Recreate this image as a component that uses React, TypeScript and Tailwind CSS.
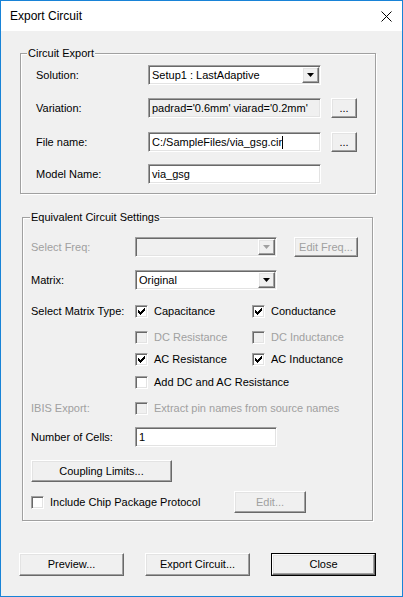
const sunken =
  "border border-t-[#a0a0a0] border-l-[#a0a0a0] border-b-white border-r-white shadow-[inset_1px_1px_0_#696969,inset_-1px_-1px_0_#e3e3e3]";
const raised =
  "border border-t-white border-l-white border-b-[#696969] border-r-[#696969] shadow-[inset_-1px_-1px_0_#a0a0a0,inset_1px_1px_0_#e3e3e3] bg-[#f0f0f0]";
const grey = "text-[#a0a0a0]";

function Arrow({ disabled = false }: { disabled?: boolean }) {
  return (
    <svg width="7" height="4" viewBox="0 0 7 4">
      <path d="M0 0H7L3.5 4Z" fill={disabled ? "#a0a0a0" : "#000"} />
    </svg>
  );
}

function Combo({
  value,
  width,
  disabled = false,
}: {
  value: string;
  width: string;
  disabled?: boolean;
}) {
  return (
    <div
      className={`${sunken} ${width} h-[20px] flex items-center ${
        disabled ? "bg-[#f0f0f0]" : "bg-white"
      }`}
    >
      <span className="flex-1 pl-[3px] whitespace-nowrap">{value}</span>
      <div
        className={`${raised} w-[17px] h-[16px] mr-[1px] flex items-center justify-center`}
      >
        <Arrow disabled={disabled} />
      </div>
    </div>
  );
}

function Field({
  value,
  width,
  readOnly = false,
  caret = false,
}: {
  value: string;
  width: string;
  readOnly?: boolean;
  caret?: boolean;
}) {
  return (
    <div
      className={`${sunken} ${width} h-[20px] flex items-center pl-[3px] whitespace-nowrap ${
        readOnly ? "bg-[#f0f0f0]" : "bg-white"
      }`}
    >
      {value}
      {caret && <span className="inline-block w-px h-[13px] bg-black" />}
    </div>
  );
}

function Button({
  label,
  width,
  height = "h-[22px]",
  disabled = false,
  isDefault = false,
}: {
  label: string;
  width: string;
  height?: string;
  disabled?: boolean;
  isDefault?: boolean;
}) {
  const face = (
    <div
      className={`${raised} w-full h-full flex items-center justify-center ${
        disabled ? grey : ""
      }`}
    >
      {label}
    </div>
  );
  if (isDefault) {
    return (
      <div className={`${width} ${height} border border-black flex`}>{face}</div>
    );
  }
  return <div className={`${width} ${height} flex`}>{face}</div>;
}

function Check({
  label,
  checked = false,
  disabled = false,
}: {
  label: string;
  checked?: boolean;
  disabled?: boolean;
}) {
  return (
    <div className="flex items-center h-[13px] whitespace-nowrap">
      <div
        className={`${sunken} w-[13px] h-[13px] flex items-center justify-center ${
          disabled ? "bg-[#f0f0f0]" : "bg-white"
        }`}
      >
        {checked && (
          <svg width="7" height="7" viewBox="0 0 7 7" shapeRendering="crispEdges">
            <path
              d="M6 0h1v1h-1zM5 1h2v1h-2zM0 2h1v1h-1zM4 2h3v1h-3zM0 3h2v1h-2zM3 3h3v1h-3zM0 4h5v1h-5zM1 5h3v1h-3zM2 6h1v1h-1z"
              fill="#000"
            />
          </svg>
        )}
      </div>
      <span className={`ml-[6px] ${disabled ? grey : ""}`}>{label}</span>
    </div>
  );
}

function Group({
  title,
  className,
  legendOffset,
  children,
}: {
  title: string;
  className: string;
  legendOffset: string;
  children: React.ReactNode;
}) {
  return (
    <fieldset
      className={`border border-[#a0a0a0] shadow-[1px_1px_0_white,inset_1px_1px_0_white] ${className}`}
    >
      <legend className={`${legendOffset} px-px leading-[13px] bg-[#f0f0f0]`}>
        {title}
      </legend>
      {children}
    </fieldset>
  );
}

export default function App() {
  return (
    <div
      className="w-[403px] h-[597px] border border-[#1883d7] bg-[#f0f0f0] flex flex-col text-[11px] leading-[13px] text-black"
      style={{ fontFamily: '"Liberation Sans", Arial, sans-serif' }}
    >
      <div className="h-[30px] bg-white flex items-center justify-between pl-[9px] pr-[10px] shrink-0">
        <span className="text-[12px] mt-px">Export Circuit</span>
        <svg width="11" height="11" viewBox="0 0 11 11">
          <path d="M0.5 0.5L10.5 10.5M10.5 0.5L0.5 10.5" stroke="#000" strokeWidth="1" />
        </svg>
      </div>

      <Group
        title="Circuit Export"
        className="mt-[16px] ml-[19px] w-[356px] pb-[9px]"
        legendOffset="ml-[6px]"
      >
        <div className="pl-[15px]">
          <div className="flex items-center h-[20px] mt-[5px]">
            <span className="w-[112px]">Solution:</span>
            <Combo value="Setup1 : LastAdaptive" width="w-[173px]" />
          </div>
          <div className="flex items-center h-[20px] mt-[13px]">
            <span className="w-[112px]">Variation:</span>
            <Field value="padrad='0.6mm' viarad='0.2mm'" width="w-[173px]" readOnly />
            <div className="ml-[10px]">
              <Button label="..." width="w-[26px]" height="h-[20px]" />
            </div>
          </div>
          <div className="flex items-center h-[20px] mt-[14px]">
            <span className="w-[112px]">File name:</span>
            <Field value="C:/SampleFiles/via_gsg.cir" width="w-[173px]" caret />
            <div className="ml-[10px]">
              <Button label="..." width="w-[26px]" height="h-[20px]" />
            </div>
          </div>
          <div className="flex items-center h-[20px] mt-[12px]">
            <span className="w-[112px]">Model Name:</span>
            <Field value="via_gsg" width="w-[173px]" />
          </div>
        </div>
      </Group>

      <Group
        title="Equivalent Circuit Settings"
        className="mt-[17px] ml-[21px] w-[351px] pb-[7px]"
        legendOffset="ml-[7px]"
      >
        <div className="pl-[8px]">
          <div className="flex items-center h-[20px] mt-[13px]">
            <span className={`w-[104px] ${grey}`}>Select Freq:</span>
            <Combo value="" width="w-[142px]" disabled />
            <div className="ml-[17px]">
              <Button label="Edit Freq..." width="w-[64px]" height="h-[20px]" disabled />
            </div>
          </div>
          <div className="flex items-center h-[20px] mt-[13px]">
            <span className="w-[104px]">Matrix:</span>
            <Combo value="Original" width="w-[142px]" />
          </div>

          <div className="flex items-center h-[13px] mt-[15px]">
            <span className="w-[104px]">Select Matrix Type:</span>
            <div className="w-[117px]">
              <Check label="Capacitance" checked />
            </div>
            <Check label="Conductance" checked />
          </div>
          <div className="flex items-center h-[13px] mt-[13px] pl-[104px]">
            <div className="w-[117px]">
              <Check label="DC Resistance" disabled />
            </div>
            <Check label="DC Inductance" disabled />
          </div>
          <div className="flex items-center h-[13px] mt-[9px] pl-[104px]">
            <div className="w-[117px]">
              <Check label="AC Resistance" checked />
            </div>
            <Check label="AC Inductance" checked />
          </div>
          <div className="flex items-center h-[13px] mt-[10px] pl-[104px]">
            <Check label="Add DC and AC Resistance" />
          </div>

          <div className="flex items-center h-[13px] mt-[13px]">
            <span className={`w-[104px] ${grey}`}>IBIS Export:</span>
            <Check label="Extract pin names from source names" disabled />
          </div>

          <div className="flex items-center h-[20px] mt-[12px]">
            <span className="w-[104px]">Number of Cells:</span>
            <Field value="1" width="w-[142px]" />
          </div>

          <div className="mt-[13px]">
            <Button label="Coupling Limits..." width="w-[141px]" />
          </div>

          <div className="flex items-center h-[22px] mt-[9px]">
            <div className="w-[203px]">
              <Check label="Include Chip Package Protocol" />
            </div>
            <Button label="Edit..." width="w-[72px]" disabled />
          </div>
        </div>
      </Group>

      <div className="flex mt-[32px] ml-[18px] gap-[21px]">
        <Button label="Preview..." width="w-[105px]" height="h-[23px]" />
        <Button label="Export Circuit..." width="w-[105px]" height="h-[23px]" />
        <Button label="Close" width="w-[105px]" height="h-[23px]" isDefault />
      </div>
    </div>
  );
}
